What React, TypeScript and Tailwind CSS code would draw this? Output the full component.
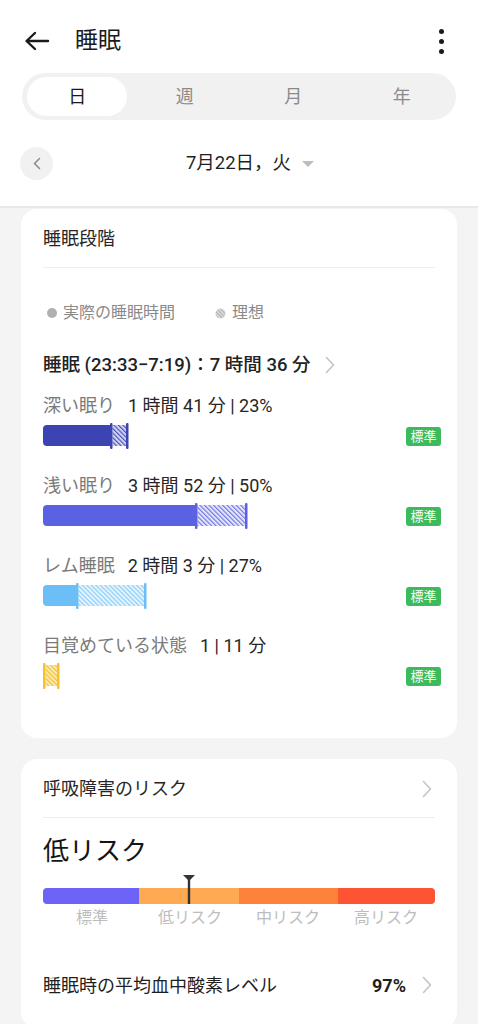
import React from "react";

const FONT = { fontFamily: 'Roboto, "Noto Sans CJK JP", "Noto Sans", sans-serif' };

type BarProps = {
  id: string;
  solidEnd: number;
  hatchEnd: number;
  solid: string;
  tick: string;
  hatchLine: string;
  hatchBg: string;
  startTick?: boolean;
};

function StageBar({ id, solidEnd, hatchEnd, solid, tick, hatchLine, hatchBg, startTick }: BarProps) {
  const tw = 2.5;
  return (
    <svg width="230" height="26" viewBox="0 0 230 26">
      <defs>
        <pattern id={id} patternUnits="userSpaceOnUse" width="3.2" height="3.2" patternTransform="rotate(-45)">
          <rect width="3.2" height="3.2" fill={hatchBg} />
          <line x1="0.6" y1="0" x2="0.6" y2="3.2" stroke={hatchLine} strokeWidth="1.2" />
        </pattern>
      </defs>
      {solidEnd > 0 && (
        <path
          d={`M4 2 H${solidEnd} V23 H4 Q0 23 0 19 V6 Q0 2 4 2 Z`}
          fill={solid}
        />
      )}
      <rect x={solidEnd + tw} y="2" width={hatchEnd - solidEnd - tw} height="21" fill={`url(#${id})`} />
      {(solidEnd > 0 || startTick) && (
        <rect x={solidEnd} y="0" width={tw} height="26" rx="1" fill={tick} />
      )}
      <rect x={hatchEnd} y="0" width={tw} height="26" rx="1" fill={tick} />
    </svg>
  );
}

function Chevron({ className = "" }: { className?: string }) {
  return (
    <svg width="10" height="18" viewBox="0 0 10 18" className={className}>
      <polyline points="1.5,1.5 8.5,9 1.5,16.5" fill="none" stroke="#c4c4c4" strokeWidth="1.6" strokeLinecap="round" strokeLinejoin="round" />
    </svg>
  );
}

function Badge() {
  return (
    <div className="h-[19px] w-[35px] rounded-[3px] bg-[#3dba5c] text-white text-[13px] leading-[19px] text-center">
      標準
    </div>
  );
}

type Row = {
  label: string;
  value: string;
  bar: BarProps;
};

const rows: Row[] = [
  {
    label: "深い眠り",
    value: "1 時間 41 分 | 23%",
    bar: { id: "deep", solidEnd: 67, hatchEnd: 83, solid: "#3b44b2", tick: "#3b44b2", hatchLine: "#4a53bb", hatchBg: "#d4d6f2" },
  },
  {
    label: "浅い眠り",
    value: "3 時間 52 分 | 50%",
    bar: { id: "light", solidEnd: 152, hatchEnd: 202, solid: "#5a61e2", tick: "#5a61e2", hatchLine: "#7379e6", hatchBg: "#e6e7fb" },
  },
  {
    label: "レム睡眠",
    value: "2 時間 3 分 | 27%",
    bar: { id: "rem", solidEnd: 33, hatchEnd: 101, solid: "#6cbff6", tick: "#6cbff6", hatchLine: "#8ccff7", hatchBg: "#e6f4fd" },
  },
  {
    label: "目覚めている状態",
    value: "1 | 11 分",
    bar: { id: "awake", solidEnd: 0, hatchEnd: 14, solid: "#f5c232", tick: "#f5c232", hatchLine: "#f3c234", hatchBg: "#fbeab5", startTick: true },
  },
];

export default function App() {
  return (
    <div className="min-h-screen w-full bg-[#f4f4f4] text-[#1f1f1f]" style={FONT}>
      {/* Header */}
      <div className="bg-white">
        <div className="flex items-center h-[32px] mt-[25px] px-[24px]">
          <svg width="26" height="20" viewBox="0 0 26 20">
            <path d="M24 10 H3 M11 2 L2.5 10 L11 18" fill="none" stroke="#1a1a1a" strokeWidth="2.4" strokeLinecap="round" strokeLinejoin="round" />
          </svg>
          <div className="ml-[25px] text-[23px] leading-[32px] text-[#1a1a1a]">睡眠</div>
          <div className="ml-auto mr-[10px] flex flex-col gap-[5px]">
            <div className="w-[5px] h-[5px] rounded-full bg-[#1a1a1a]" />
            <div className="w-[5px] h-[5px] rounded-full bg-[#1a1a1a]" />
            <div className="w-[5px] h-[5px] rounded-full bg-[#1a1a1a]" />
          </div>
        </div>

        <div className="mt-[16px] mx-[22px] h-[47px] rounded-full bg-[#f1f1f1] grid grid-cols-4 items-center">
          <div className="flex items-center justify-center">
            <div className="ml-[2px] w-[100px] h-[39px] rounded-full bg-white flex items-center justify-center text-[18px] text-[#1a1a1a]">
              日
            </div>
          </div>
          <div className="text-center text-[18px] text-[#8a8a8a]">週</div>
          <div className="text-center text-[18px] text-[#8a8a8a]">月</div>
          <div className="text-center text-[18px] text-[#8a8a8a]">年</div>
        </div>

        <div className="mt-[27px] pb-[26px] px-[20px] flex items-center h-[33px] relative box-content">
          <div className="w-[33px] h-[33px] rounded-full bg-[#f1f1f1] flex items-center justify-center">
            <svg width="8" height="13" viewBox="0 0 8 13">
              <polyline points="6.5,1.5 1.5,6.5 6.5,11.5" fill="none" stroke="#8a8a8a" strokeWidth="1.5" strokeLinecap="round" strokeLinejoin="round" />
            </svg>
          </div>
          <div className="flex-1 flex items-center justify-center mr-[33px] pl-[22px]">
            <span className="text-[18.5px] text-[#1f1f1f]">7月22日，火</span>
            <svg width="12" height="8" viewBox="0 0 12 8" className="ml-[11px]">
              <polygon points="0,1 12,1 6,7" fill="#bdbdbd" />
            </svg>
          </div>
        </div>
      </div>
      <div className="h-[2px] bg-[#e8e8e8]" />

      {/* Card 1 */}
      <div className="mx-[21px] mt-[1px] bg-white rounded-[16px] px-[22px] pt-[18px] pb-[49px]">
        <div className="text-[18px] leading-[24px] text-[#262626]">睡眠段階</div>
        <div className="mt-[16px] h-px bg-[#ededed]" />

        <div className="mt-[34px] flex items-center h-[22px] text-[16px] text-[#8a8a8a]">
          <div className="ml-[4px] w-[10px] h-[10px] rounded-full bg-[#b0b0b0]" />
          <span className="ml-[6px]">実際の睡眠時間</span>
          <svg width="11" height="11" viewBox="0 0 11 11" className="ml-[40px]">
            <defs>
              <pattern id="lg" patternUnits="userSpaceOnUse" width="2.6" height="2.6" patternTransform="rotate(-45)">
                <rect width="2.6" height="2.6" fill="#e0e0e0" />
                <line x1="0.6" y1="0" x2="0.6" y2="2.6" stroke="#a8a8a8" strokeWidth="1" />
              </pattern>
            </defs>
            <circle cx="5.5" cy="5.5" r="5" fill="url(#lg)" />
          </svg>
          <span className="ml-[6px]">理想</span>
        </div>

        <div className="mt-[28px] flex items-center h-[26px]">
          <span className="text-[18.5px] leading-[26px] font-medium text-[#222]">睡眠 (23:33−7:19)：7 時間 36 分</span>
          <Chevron className="ml-[14px]" />
        </div>

        <div className="mt-[15px] flex flex-col gap-[24px]">
          {rows.map((r) => (
            <div key={r.label}>
              <div className="flex items-center h-[24px] text-[18px]">
                <span className="text-[#7a7a7a]">{r.label}</span>
                <span className="ml-[13px] text-[#262626]">{r.value}</span>
              </div>
              <div className="mt-[6px] flex items-center h-[26px]">
                <StageBar {...r.bar} />
                <div className="ml-auto mr-[-6px]">
                  <Badge />
                </div>
              </div>
            </div>
          ))}
        </div>
      </div>

      {/* Card 2 */}
      <div className="mx-[21px] mt-[21px] bg-white rounded-[16px] px-[22px] pt-[18px] pb-[30px]">
        <div className="flex items-center h-[24px]">
          <span className="text-[18px] leading-[24px] text-[#262626]">呼吸障害のリスク</span>
          <Chevron className="ml-auto mr-[3px]" />
        </div>
        <div className="mt-[16px] h-px bg-[#ededed]" />
        <div className="mt-[16px] text-[26px] leading-[34px] text-[#141414]">低リスク</div>

        <div className="mt-[20px] relative">
          <div className="flex h-[16px] rounded-[4px] overflow-hidden">
            <div className="w-[96px] bg-[#6d63f6]" />
            <div className="w-[100px] bg-[#fdaa52]" />
            <div className="w-[99px] bg-[#fd823a]" />
            <div className="flex-1 bg-[#fd5434]" />
          </div>
          <svg width="14" height="30" viewBox="0 0 14 30" className="absolute left-[139px] top-[-13px]">
            <polygon points="1,0 13,0 7,6" fill="#333" />
            <rect x="5.8" y="3" width="2.4" height="26" fill="#333" />
          </svg>
        </div>
        <div className="mt-[4px] grid grid-cols-4 text-center text-[16px] leading-[20px] text-[#bdbdbd]">
          <span>標準</span>
          <span>低リスク</span>
          <span>中リスク</span>
          <span>高リスク</span>
        </div>

        <div className="mt-[44px] flex items-center h-[26px]">
          <span className="text-[18px] text-[#1f1f1f]">睡眠時の平均血中酸素レベル</span>
          <span className="ml-auto text-[18px] font-bold text-[#1f1f1f]">97%</span>
          <Chevron className="ml-[16px] mr-[3px]" />
        </div>
      </div>
    </div>
  );
}
